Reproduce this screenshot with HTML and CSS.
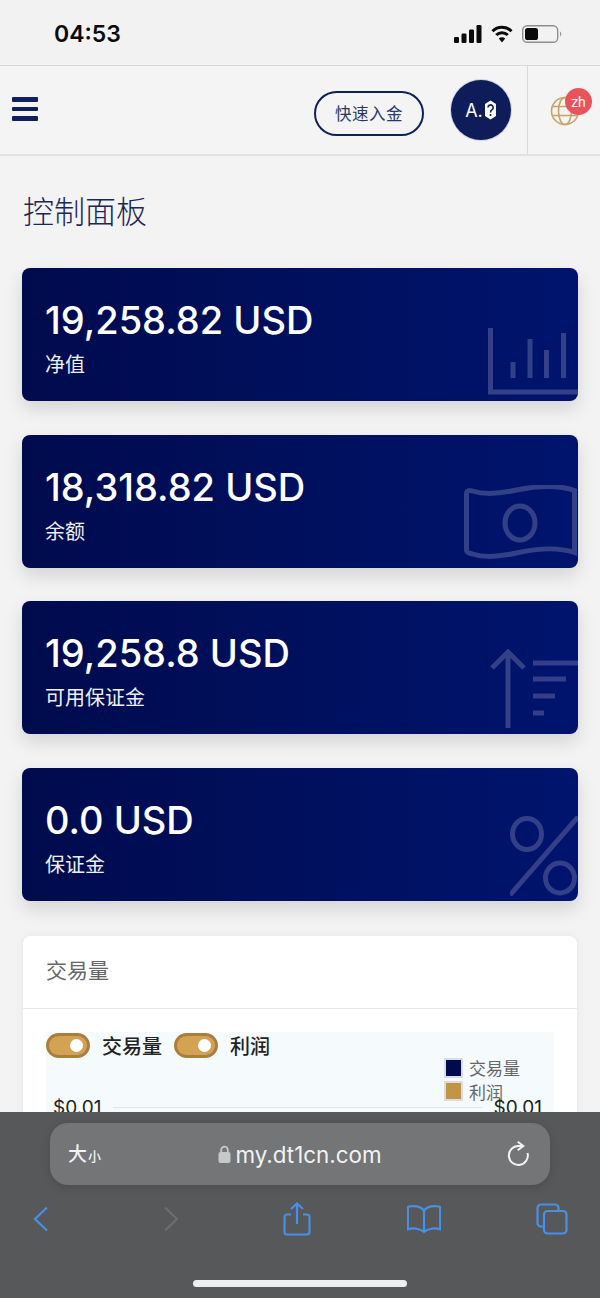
FILE: index.html
```html
<!DOCTYPE html>
<html lang="zh">
<head>
    <meta charset="UTF-8">
    <meta name="viewport" content="width=device-width, initial-scale=1.0">
    <title>控制面板</title>
    <link rel="stylesheet" href="styles.css">
</head>
<body>
    <div class="page">
        <!-- phone status bar -->
        <div class="status-bar">
            <span class="clock">04:53</span>
            <div class="status-icons">
                <svg width="28" height="18" viewBox="0 0 28 18"><rect x="0" y="12" width="5" height="6" rx="1.2"/><rect x="7.5" y="8.5" width="5" height="9.5" rx="1.2"/><rect x="15" y="4.5" width="5" height="13.5" rx="1.2"/><rect x="22.5" y="0" width="5" height="18" rx="1.2"/></svg>
                <svg width="22" height="18" viewBox="0 0 22 18"><path d="M1.5 6.2a13.6 13.6 0 0 1 19 0" class="wifi-line"/><path d="M5.2 10a8.4 8.4 0 0 1 11.6 0" class="wifi-line"/><path d="M11 17.5l-3.2-4a4.6 4.6 0 0 1 6.4 0z"/></svg>
                <svg width="40" height="18" viewBox="0 0 40 18"><rect x="0.7" y="0.7" width="35" height="16.6" rx="4.6" class="battery-case"/><rect x="3" y="3" width="13" height="12" rx="2.6"/><path d="M38 6.5a3 3 0 0 1 0 5z" class="battery-tip"/></svg>
            </div>
        </div>

        <header class="topbar">
            <div class="menu-btn"><span></span><span></span><span></span></div>
            <a class="deposit-btn">快速入金</a>
            <div class="avatar">
                A.<svg width="13" height="20" viewBox="0 0 13 20"><path d="M6.5 0.5L12 4v12l-5.500 3.500L1 16V4z" fill="#fff"/><path d="M4 7.500a2.600 2.600 0 1 1 4 2.200c-1 .7-1.500 1.300-1.500 2.800M6.500 14v2" class="avatar-mark"/></svg>
            </div>
            <div class="lang">
                <svg width="30" height="30" viewBox="0 0 30 30" class="globe"><circle cx="15" cy="15" r="13.500"/><ellipse cx="15" cy="15" rx="6.500" ry="13.500"/><path d="M2 10.500h26M2 19.500h26"/></svg>
                <span class="lang-badge">zh</span>
            </div>
        </header>

        <main class="content">
            <h1 class="page-title">控制面板</h1>

            <div class="stat-card">
                <div class="stat-value">19,258.82 USD</div>
                <div class="stat-label">净值</div>
                <svg class="stat-icon" width="90" height="68" viewBox="0 0 90 68"><path d="M2.500 0v64H90" class="thick"/><path d="M25 34v16M42 11v39M58.500 22v28M75.500 5v45" class="thick"/></svg>
            </div>

            <div class="stat-card">
                <div class="stat-value">18,318.82 USD</div>
                <div class="stat-label">余额</div>
                <svg class="stat-icon" width="114" height="78" viewBox="0 0 114 78"><path d="M2.500 8.500c0-3 3-3.500 6-2.500 12 4 26 3 44-1 20-4 40-6 58 0.500v62c-18-6-38-4-58 .5-18 4-32 5-44 1-3-1-6-1-6-4z" class="thick"/><ellipse cx="56" cy="38" rx="15" ry="17" class="thick"/></svg>
            </div>

            <div class="stat-card">
                <div class="stat-value">19,258.8 USD</div>
                <div class="stat-label">可用保证金</div>
                <svg class="stat-icon" width="88" height="80" viewBox="0 0 88 80"><path d="M18 79V3M2 19L18 3l16 16" class="thick"/><path d="M43 14h45M43 30h33M43 47h22M43 64h11" class="thick"/></svg>
            </div>

            <div class="stat-card">
                <div class="stat-value">0.0 USD</div>
                <div class="stat-label">保证金</div>
                <svg class="stat-icon" width="68" height="80" viewBox="0 0 68 80"><ellipse cx="17" cy="18" rx="14.500" ry="15.500" class="thick"/><ellipse cx="50" cy="62" rx="14.500" ry="15" class="thick"/><path d="M0 79L68 1" class="thick"/></svg>
            </div>

            <section class="panel">
                <div class="panel-head">交易量</div>
                <div class="panel-body">
                    <div class="chart">
                        <div class="toggles">
                            <span class="toggle"></span><span class="toggle-text">交易量</span>
                            <span class="toggle"></span><span class="toggle-text">利润</span>
                        </div>
                        <div class="legend">
                            <div class="legend-row"><i class="swatch navy"></i>交易量</div>
                            <div class="legend-row"><i class="swatch gold"></i>利润</div>
                        </div>
                        <div class="axis-row">
                            <span>$0.01</span>
                            <div class="axis-lines"></div>
                            <span>$0.01</span>
                        </div>
                    </div>
                </div>
            </section>
        </main>

        <!-- safari toolbar sits over the page -->
        <div class="safari">
            <div class="url-bar">
                <span class="text-size">大<small>小</small></span>
                <span class="url">
                    <svg width="13" height="18" viewBox="0 0 13 18"><path d="M3.200 8V5a3.300 3.300 0 0 1 6.600 0v3" class="lock-arc"/><rect x="0.500" y="7" width="12" height="11" rx="2" fill="#c6c8ca"/></svg>
                    my.dt1cn.com
                </span>
                <svg width="24" height="28" viewBox="0 0 24 28" class="reload"><path d="M17 5h-4.700a9.500 9.500 0 1 0 9.200 7"/><path d="M11.700 0.800l5.600 4.200-5.600 4.300"/></svg>
            </div>
            <div class="safari-nav">
                <svg width="16" height="26" viewBox="0 0 16 26" class="nav-icon"><path d="M14 1.500L2 13l12 11.500"/></svg>
                <svg width="16" height="26" viewBox="0 0 16 26" class="nav-icon off"><path d="M2 1.500L14 13 2 24.500"/></svg>
                <svg width="28" height="34" viewBox="0 0 28 34" class="nav-icon"><path d="M8 12.500H4a2.500 2.500 0 0 0-2.500 2.500v15A2.500 2.500 0 0 0 4 32.500h20a2.500 2.500 0 0 0 2.500-2.500V15a2.500 2.500 0 0 0-2.500-2.500h-4M14 22V1.500M8 7l6-5.500L20 7"/></svg>
                <svg width="34" height="30" viewBox="0 0 34 30" class="nav-icon"><path d="M17 6.500C14 2.500 9 1.500 2 2.500c-.8.100-1.200.6-1.200 1.300v21.500c4-1.500 11-1.500 16.200 2.500 5.200-4 12.200-4 16.200-2.500V3.800c0-.7-.4-1.200-1.200-1.300C25 1.500 20 2.500 17 6.500zM17 6.500v21"/></svg>
                <svg width="32" height="32" viewBox="0 0 32 32" class="nav-icon"><path d="M7 23.500H5a3.500 3.500 0 0 1-3.500-3.500V5A3.500 3.500 0 0 1 5 1.500h14A3.500 3.500 0 0 1 22.500 5v2"/><rect x="8" y="8" width="22.500" height="22.500" rx="3.500"/></svg>
            </div>
            <div class="home-bar"></div>
        </div>
    </div>
</body>
</html>
```
FILE: styles.css
```css
* {
    margin: 0;
    padding: 0;
    box-sizing: border-box;
}

body {
    font-family: 'Noto Sans CJK SC', sans-serif;
    background: #f3f3f3;
}

.page {
    position: relative;
    width: 600px;
    height: 1298px;
    overflow: hidden;
    background: #f3f3f3;
}

/* status bar */
.status-bar {
    height: 66px;
    display: flex;
    justify-content: space-between;
    align-items: center;
    padding: 2px 38px 0 54px;
    background: #f2f2f2;
    border-bottom: 1px solid #d9d9d9;
}

.clock {
    font-family: 'Inter', sans-serif;
    font-size: 23px;
    font-weight: 600;
    color: #0b0b0b;
}

.status-icons {
    display: flex;
    align-items: center;
    gap: 9px;
    fill: #0b0b0b;
}

.wifi-line {
    fill: none;
    stroke: #0b0b0b;
    stroke-width: 3;
}

.battery-case {
    fill: none;
    stroke: #8e8e8e;
    stroke-width: 1.400;
}

.battery-tip {
    fill: #9a9a9a;
}

/* top bar */
.topbar {
    height: 90px;
    display: flex;
    align-items: center;
    background: #f4f4f4;
    border-bottom: 2px solid #e2e2e2;
}

.menu-btn {
    width: 26px;
    margin-left: 12px;
    margin-top: -2px;
    display: grid;
    gap: 5px;
}

.menu-btn span {
    height: 4.500px;
    border-radius: 1px;
    background: #10205c;
}

.deposit-btn {
    margin-left: auto;
    margin-top: 6px;
    width: 110px;
    height: 45px;
    display: flex;
    justify-content: center;
    align-items: center;
    border: 2px solid #10205c;
    border-radius: 23px;
    font-size: 16.500px;
    letter-spacing: 0.500px;
    color: #2a3768;
}

.avatar {
    width: 60px;
    height: 60px;
    margin-left: 27px;
    display: flex;
    justify-content: center;
    align-items: center;
    gap: 1px;
    border-radius: 50%;
    background: #0e1c5a;
    box-shadow: 0 0 0 1px #cfd2e4;
    font-family: 'Inter', sans-serif;
    font-size: 18px;
    color: #fff;
}

.avatar-mark {
    fill: none;
    stroke: #0e1c5a;
    stroke-width: 1.600;
}

.lang {
    position: relative;
    width: 73px;
    height: 100%;
    margin-left: 16px;
    display: flex;
    align-items: center;
    border-left: 1px solid #d9d9d9;
    padding-left: 22px;
}

.globe {
    fill: none;
    stroke: #c9a366;
    stroke-width: 1.600;
    margin-top: 1px;
}

.lang-badge {
    position: absolute;
    left: 37px;
    top: 22px;
    width: 27px;
    height: 27px;
    display: flex;
    justify-content: center;
    align-items: center;
    border-radius: 50%;
    background: #e9545a;
    font-family: 'Roboto', sans-serif;
    font-size: 14px;
    color: #fff;
}

/* page content */
.content {
    padding: 0 22px;
}

.page-title {
    margin-top: 32px;
    margin-bottom: 36px;
    padding-left: 1px;
    font-size: 31px;
    line-height: 44px;
    font-weight: 300;
    color: #1c2658;
}

.stat-card {
    position: relative;
    height: 133px;
    margin-bottom: 33.700px;
    padding: 27px 23px 0;
    border-radius: 8px;
    background: linear-gradient(90deg, #000b4d, #00146e);
    box-shadow: 0 8px 18px rgba(0, 0, 0, 0.13);
    color: #fff;
    overflow: hidden;
}

.stat-value {
    font-family: 'Inter', sans-serif;
    font-size: 38px;
    line-height: 50px;
    font-weight: 500;
}

.stat-label {
    margin-top: 7px;
    font-size: 20px;
    line-height: 24px;
    font-weight: 400;
    color: #eef0f8;
}

.stat-icon {
    position: absolute;
    right: 0;
    bottom: 5px;
    fill: none;
    stroke: #333f87;
}

.thick {
    stroke-width: 5;
}

/* volume panel */
.panel {
    margin: 35px 1px 0;
    height: 300px;
    border-radius: 8px 8px 0 0;
    background: #fff;
    box-shadow: 0 0 8px rgba(0, 0, 0, 0.06);
}

.panel-head {
    height: 73px;
    padding: 18px 23px 0;
    border-bottom: 1px solid #e8e8e8;
    font-size: 21px;
    line-height: 30px;
    color: #666;
}

.panel-body {
    padding: 23px 23px 0;
}

.chart {
    position: relative;
    height: 200px;
    background: #f5fafd;
}

.toggles {
    display: flex;
    align-items: center;
    height: 26px;
    font-size: 20px;
    font-weight: 500;
    color: #222;
}

.toggle {
    position: relative;
    width: 44px;
    height: 25px;
    border-radius: 13px;
    border: 3px solid #a87f3d;
    background: #d3a253;
}

.toggle::after {
    content: "";
    position: absolute;
    right: 4px;
    top: 3px;
    width: 13px;
    height: 13px;
    border-radius: 50%;
    background: #fff;
}

.toggle-text {
    margin: 0 12px 0 12px;
}

.legend {
    position: absolute;
    left: 398px;
    top: 24px;
    font-size: 17px;
    color: #666;
}

.legend-row {
    display: flex;
    align-items: center;
    height: 23.500px;
    gap: 6px;
}

.swatch {
    width: 19px;
    height: 20px;
    border: 2px solid #d8dde6;
}

.navy {
    background: #000b4d;
}

.gold {
    background: #c29545;
}

.axis-row {
    position: absolute;
    left: 7px;
    right: 12px;
    top: 64px;
    display: flex;
    gap: 12px;
    font-family: 'Inter', sans-serif;
    font-size: 19px;
    line-height: 24px;
    color: #222;
}

.axis-lines {
    flex: 1;
    height: 30px;
    margin-top: 11px;
    border-top: 1px solid #e2e6ea;
}

/* safari toolbar */
.safari {
    position: absolute;
    left: 0;
    right: 0;
    bottom: 0;
    height: 186px;
    background: #565859;
}

.url-bar {
    position: absolute;
    left: 50px;
    top: 11px;
    width: 500px;
    height: 62px;
    display: flex;
    align-items: center;
    justify-content: center;
    border-radius: 18px;
    background: #737577;
    box-shadow: 0 2px 10px rgba(0, 0, 0, 0.15);
}

.text-size {
    position: absolute;
    left: 18px;
    top: 17px;
    font-size: 19px;
    line-height: 26px;
    font-weight: 500;
    color: #f2f2f2;
}

.text-size small {
    margin-left: 1px;
    font-size: 13px;
}

.url {
    display: flex;
    align-items: center;
    gap: 4px;
    font-family: 'Inter', sans-serif;
    font-size: 22.400px;
    color: #f2f2f2;
}

.lock-arc {
    fill: none;
    stroke: #c6c8ca;
    stroke-width: 1.800;
}

.reload {
    position: absolute;
    right: 20px;
    top: 18px;
    fill: none;
    stroke: #f2f2f2;
    stroke-width: 2;
}

.safari-nav {
    position: absolute;
    left: 0;
    top: 87px;
    width: 100%;
    height: 40px;
    padding: 0 31px 0 24px;
    display: grid;
    grid-template-columns: repeat(5, 34px);
    justify-content: space-between;
    justify-items: center;
    align-items: center;
}

.nav-icon {
    fill: none;
    stroke: #4a8fe6;
    stroke-width: 2.200;
}

.nav-icon.off {
    margin-left: 4px;
    stroke: #6c6e70;
}

.home-bar {
    position: absolute;
    left: 193px;
    bottom: 11px;
    width: 214px;
    height: 7px;
    border-radius: 4px;
    background: #eeeeee;
}
```
